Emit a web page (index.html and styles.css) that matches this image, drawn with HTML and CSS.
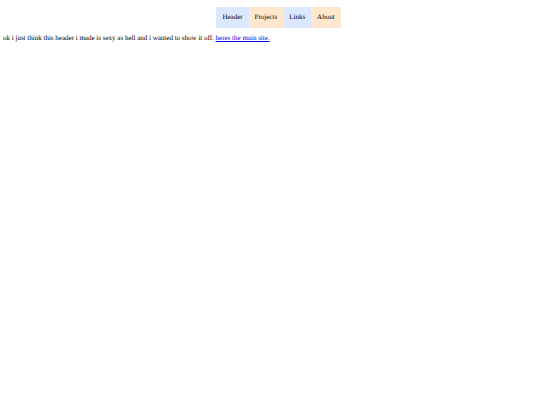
FILE: index.html
```html
<!DOCTYPE html>
<html lang="en">
<head>
  <meta charset="UTF-8">
  <meta name="viewport" content="width=device-width, initial-scale=1.0">
  <title>Header</title>
  <link rel="stylesheet" href="styles.css">
</head>
<body>
  <header>
    <ul class="nav">
      <li>Header</li>
      <li>Projects</li>
      <li>Links</li>
      <li>About</li>
    </ul>
  </header>
  <p class="intro">ok i just think this header i made is sexy as hell and i wanted to show it off. <a href="#">heres the main site.</a></p>
</body>
</html>
```

FILE: styles.css
```css
body {
  margin: 0;
  padding: 7px 3px;
  font-family: "Liberation Serif", "Times New Roman", serif;
  font-size: 7px;
  line-height: 8px;
  text-rendering: geometricPrecision;
  color: #000;
  background-color: #fff;
}

.nav {
  display: flex;
  justify-content: center;
  margin: 0;
  padding: 0 0 0 17px;
  list-style: none;
}

.nav li {
  padding: 6px 6px 7px;
  background-color: #dbe8ff;
}

.nav li:nth-child(even) {
  background-color: #ffe6cf;
}

.intro {
  margin: 6px 0;
}

a {
  color: #0000ee;
}
```
